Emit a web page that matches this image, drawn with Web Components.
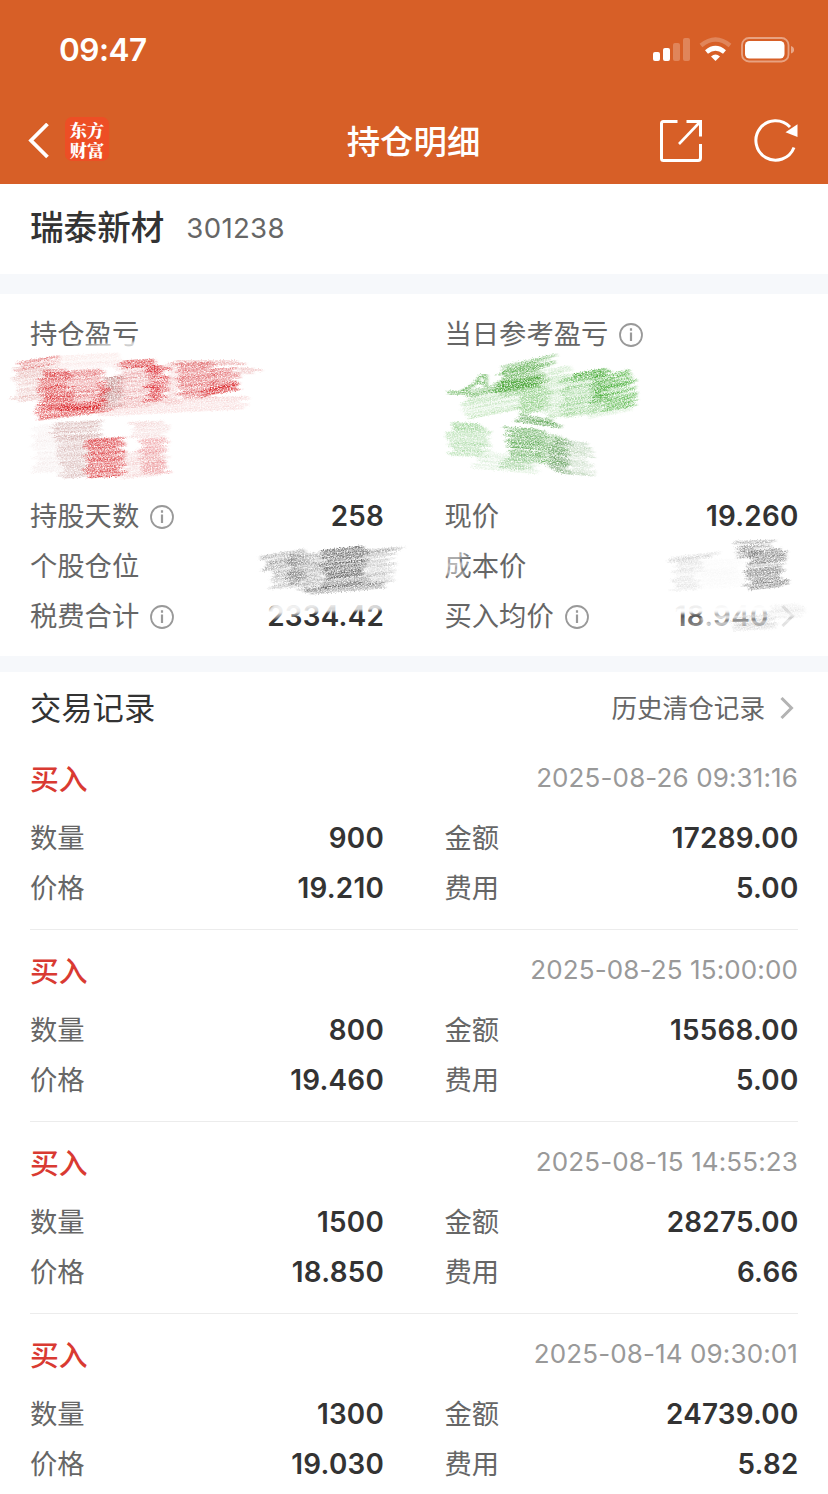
<!DOCTYPE html>
<html lang="zh-CN">
<head>
    <meta charset="UTF-8">
    <title>持仓明细</title>
    <style>
        body{
            margin:0;
            width:828px;
            height:1494px;
            overflow:hidden;
            background-color:#fff;
            color:#333;
            font-family:Inter,"Noto Sans CJK SC",sans-serif;
        }
    </style>
</head>
<body>
<template id="status-bar-template">
    <style>
        :host{
            display:flex;
            justify-content:space-between;
            height:98px;
            padding:0 34px 0 59px;
            background-color:#d75f27;
            color:#fff;
            box-sizing:border-box;
        }
        .time{
            font-size:31.5px;
            font-weight:600;
            line-height:99px;
            letter-spacing:-.5px;
        }
        svg{
            display:block;
            margin-top:36px;
        }
    </style>
    <span class="time"><slot></slot></span>
    <svg width="142" height="28" viewBox="652 36 142 28" fill="#fff">
        <rect x="653" y="52" width="7" height="9" rx="2"/>
        <rect x="663" y="48" width="7" height="13" rx="2"/>
        <rect x="673" y="43" width="7" height="18" rx="2" opacity=".24"/>
        <rect x="683" y="38" width="7" height="23" rx="2" opacity=".24"/>
        <path d="M701 45.500Q715.500 33.500 730 45.500" fill="none" stroke="#fff" stroke-width="4.400" opacity=".24"/>
        <path d="M706.500 52Q715.500 44.500 724.500 52" fill="none" stroke="#fff" stroke-width="4.600"/>
        <path d="M711 56.500Q715.500 52.600 720 56.500L715.500 61Z"/>
        <rect x="742" y="38" width="46.500" height="23.500" rx="7" fill="none" stroke="#fff" stroke-width="1.800" opacity=".42"/>
        <rect x="745" y="41" width="39.500" height="17.500" rx="4.500"/>
        <path d="M791 46q3.200 1 3.200 3.800t-3.200 3.800z" opacity=".45"/>
    </svg>
</template>

<template id="nav-bar-template">
    <style>
        :host{
            display:grid;
            grid-template-columns:1fr auto 1fr;
            align-items:center;
            height:86px;
            padding:0 29px 0 28px;
            background-color:#d75f27;
            color:#fff;
            box-sizing:border-box;
        }
        h1{
            margin:0;
            padding-top:1px;
            font-size:33.4px;
            font-weight:500;
            line-height:48px;
        }
        .left{
            display:flex;
            align-items:center;
            gap:16px;
        }
        .logo{
            width:44px;
            height:44px;
            border-radius:7px;
            background-color:#ed4e25;
            font:900 17.2px/20px "Liberation Sans","Noto Serif CJK SC","Noto Sans CJK SC",sans-serif;
            text-align:center;
            box-sizing:border-box;
            padding-top:4px;
            margin-top:-4px;
        }
        .right{
            display:flex;
            justify-content:flex-end;
            gap:50px;
        }
        svg{
            display:block;
            fill:none;
            stroke:#fff;
        }
    </style>
    <div class="left">
        <svg width="21" height="36" viewBox="0 0 21 36" stroke-width="3.800"><path d="M19.500 1L3 17.500L19.500 34"/></svg>
        <div class="logo">东方<br>财富</div>
    </div>
    <h1><slot></slot></h1>
    <div class="right">
        <svg width="44" height="44" viewBox="0 0 44 44" stroke-width="3">
            <path d="M18.500 2.500H4.500Q2.500 2.500 2.500 4.500V39.500Q2.500 41.500 4.500 41.500H39Q41.500 41.500 41.500 39V25"/>
            <path d="M27.500 2.500H41.500V17.500"/>
            <path d="M40 4L20 25" stroke-width="2.600"/>
        </svg>
        <svg width="46" height="44" viewBox="0 0 46 44" stroke-width="3">
            <path d="M37 8A19.700 19.700 0 1 0 41 28.500"/>
            <path d="M44.500 5.300V18L32.500 13.200Z" fill="#fff" stroke="none"/>
        </svg>
    </div>
</template>

<template id="stock-title-template">
    <style>
        :host{
            display:flex;
            align-items:center;
            gap:22px;
            height:88px;
            padding:0 30px 2px;
            border-bottom:20px solid #f6f8fb;
        }
        .name{
            font-size:33.6px;
            font-weight:500;
            line-height:50px;
        }
        .code{
            color:#666;
            font-size:27.6px;
            letter-spacing:.3px;
        }
    </style>
    <span class="name"><slot name="name"></slot></span>
    <span class="code"><slot name="code"></slot></span>
</template>

<template id="info-icon-template">
    <style>
        :host{
            display:inline-block;
            width:24px;
            height:24px;
            margin-left:11px;
            margin-top:-1px;
        }
        svg{
            display:block;
        }
    </style>
    <svg width="24" height="24" viewBox="0 0 24 24" fill="none" stroke="#999" stroke-width="1.800">
        <circle cx="12" cy="12" r="11"/>
        <path d="M12 9.500V18M12 5.300V7.700" stroke-width="2.200"/>
    </svg>
</template>

<template id="arrow-icon-template">
    <style>
        :host{
            display:block;
            width:14px;
            height:22px;
        }
        svg{
            display:block;
        }
    </style>
    <svg width="14" height="22" viewBox="0 0 14 22" fill="none" stroke="#b3b3b3" stroke-width="3"><path d="M1.500 1L11.500 11L1.500 21"/></svg>
</template>

<template id="data-field-template">
    <style>
        :host{
            display:flex;
            align-items:center;
            height:50px;
        }
        .label{
            flex:1;
            display:flex;
            align-items:center;
            padding-top:2px;
            color:#666;
            font-size:27.3px;
            line-height:40px;
            white-space:nowrap;
        }
        .value{
            font-size:27.8px;
            font-weight:600;
            letter-spacing:.25px;
            line-height:40px;
            margin-right:-.5px;
        }
        ::slotted(arrow-icon){
            margin:0 3px 0 13px;
        }
    </style>
    <span class="label"><slot name="label"></slot><slot name="info"></slot></span>
    <span class="value"><slot></slot></span>
    <slot name="arrow"></slot>
</template>

<template id="holding-panel-template">
    <style>
        :host{
            display:grid;
            grid-template-columns:353.5px 353.5px;
            column-gap:61px;
            position:relative;
            height:332px;
            padding:15px 30px;
            border-bottom:16px solid #f6f8fb;
        }
        .col{
            display:flex;
            flex-direction:column;
        }
        .head{
            height:182px;
        }
    </style>
    <div class="col"><div class="head"><slot name="left-head"></slot></div><slot name="left"></slot></div>
    <div class="col"><div class="head"><slot name="right-head"></slot></div><slot name="right"></slot></div>
    <slot name="cover"></slot>
</template>

<template id="pencil-smudge-template">
    <style>
        :host{
            position:absolute;
            left:0;
            top:0;
            width:828px;
            height:362px;
            pointer-events:none;
        }
        svg{
            display:block;
        }
    </style>
    <svg width="828" height="362" viewBox="0 294 828 362">
        <defs>
            <filter id="grain" filterUnits="userSpaceOnUse" x="0" y="294" width="828" height="362" color-interpolation-filters="sRGB">
                <feTurbulence type="fractalNoise" baseFrequency=".7 .8" numOctaves="2" seed="8" result="noise"/>
                <feColorMatrix in="noise" type="matrix" values="0 0 0 0 0  0 0 0 0 0  0 0 0 0 0  2.200 0 0 0 -.400" result="mask"/>
                <feGaussianBlur in="SourceGraphic" stdDeviation="1.400 .6" result="blur"/>
                <feDisplacementMap in="blur" in2="noise" scale="4" xChannelSelector="R" yChannelSelector="G" result="rough"/>
                <feComposite in="rough" in2="mask" operator="in"/>
            </filter>
            <filter id="soft" filterUnits="userSpaceOnUse" x="0" y="294" width="828" height="362">
                <feGaussianBlur stdDeviation="1.300"/>
            </filter>
        </defs>
        <g id="white" filter="url(#soft)"></g>
        <g id="color" filter="url(#grain)"></g>
    </svg>
</template>

<template id="record-head-template">
    <style>
        :host{
            display:flex;
            align-items:center;
            height:60px;
            padding:6px 30px 0;
        }
        .title{
            flex:1;
            margin-top:-4px;
            font-size:31.3px;
        }
        .more{
            color:#666;
            font-size:25.6px;
            margin-top:-3px;
            margin-right:15px;
        }
        arrow-icon{
            margin-right:4px;
        }
    </style>
    <span class="title"><slot></slot></span>
    <span class="more"><slot name="more"></slot></span>
    <arrow-icon></arrow-icon>
</template>

<template id="trade-record-template">
    <style>
        :host{
            display:block;
            height:175px;
            margin:0 30px;
            padding-top:16px;
            border-bottom:1px solid #ececec;
        }
        .top{
            display:flex;
            justify-content:space-between;
            align-items:center;
            height:46px;
            margin-bottom:13px;
        }
        .side{
            color:#d93a32;
            font-size:28.8px;
            font-weight:500;
        }
        .time{
            color:#999;
            font-size:26px;
            letter-spacing:.12px;
        }
        .grid{
            display:grid;
            grid-template-columns:353.5px 353.5px;
            column-gap:61px;
        }
    </style>
    <div class="top"><span class="side">买入</span><span class="time"></span></div>
    <div class="grid">
        <data-field><span slot="label">数量</span><span class="count"></span></data-field>
        <data-field><span slot="label">金额</span><span class="amount"></span></data-field>
        <data-field><span slot="label">价格</span><span class="price"></span></data-field>
        <data-field><span slot="label">费用</span><span class="fee"></span></data-field>
    </div>
</template>

<status-bar>09:47</status-bar>
<nav-bar>持仓明细</nav-bar>
<stock-title><span slot="name">瑞泰新材</span><span slot="code">301238</span></stock-title>
<holding-panel>
    <data-field slot="left-head"><span slot="label">持仓盈亏</span></data-field>
    <data-field slot="left"><span slot="label">持股天数</span><info-icon slot="info"></info-icon>258</data-field>
    <data-field slot="left"><span slot="label">个股仓位</span></data-field>
    <data-field slot="left"><span slot="label">税费合计</span><info-icon slot="info"></info-icon>2334.42</data-field>
    <data-field slot="right-head"><span slot="label">当日参考盈亏</span><info-icon slot="info"></info-icon></data-field>
    <data-field slot="right"><span slot="label">现价</span>19.260</data-field>
    <data-field slot="right"><span slot="label">成本价</span></data-field>
    <data-field slot="right"><span slot="label">买入均价</span><info-icon slot="info"></info-icon>18.940<arrow-icon slot="arrow"></arrow-icon></data-field>
    <pencil-smudge slot="cover"></pencil-smudge>
</holding-panel>
<record-head>交易记录<span slot="more">历史清仓记录</span></record-head>
<trade-record time="2025-08-26 09:31:16" count="900" amount="17289.00" price="19.210" fee="5.00"></trade-record>
<trade-record time="2025-08-25 15:00:00" count="800" amount="15568.00" price="19.460" fee="5.00"></trade-record>
<trade-record time="2025-08-15 14:55:23" count="1500" amount="28275.00" price="18.850" fee="6.66"></trade-record>
<trade-record time="2025-08-14 09:30:01" count="1300" amount="24739.00" price="19.030" fee="5.82"></trade-record>

<script type="text/javascript">
    class BaseElement extends HTMLElement {
        constructor() {
            super();
            const template = document.getElementById(this.localName + "-template").content;
            this.attachShadow({mode: 'open'}).appendChild(template.cloneNode(true));
        }
    }

    // x, y, width, height, slope, color, opacity
    const smudges = [
        [15,366,40,34,-.12,"#d98c88",.36],
        [18,359,37,9,-.2,"#dc5a5c",.55],
        [42,370,28,40,-.05,"#dc3438",.75],
        [66,370,38,40,-.06,"#dc4a4e",.52],
        [36,405,72,11,-.12,"#dc2c30",.6],
        [62,407,41,3,-.07,"#d81c20",1],
        [103,378,18,31,-.1,"#b9807e",.7],
        [98,382,8,24,-.1,"#dc3438",.65],
        [55,355,70,14,-.05,"#f0b4b0",.22],
        [118,364,34,44,-.08,"#e07a7c",.44],
        [120,360,40,7,-.04,"#dc3c40",.8],
        [148,366,18,36,-.03,"#dc2c34",.85],
        [165,363,16,42,-.05,"#eeb0b0",.4],
        [180,363,32,36,-.05,"#dc4a4e",.6],
        [210,369,26,22,-.05,"#dc4a4e",.65],
        [204,386,38,8,-.18,"#dc3034",.85],
        [176,361,64,4,0,"#dc6c6c",.45],
        [234,368,23,6,0,"#e08c8c",.45],
        [100,400,145,14,-.05,"#f0b4b4",.36],
        [52,422,46,18,-.05,"#c99a98",.48],
        [60,438,30,40,-.06,"#c79a98",.48],
        [34,425,30,48,-.04,"#e4cccc",.24],
        [87,438,35,39,-.06,"#dc3c40",.78],
        [132,422,33,16,-.04,"#eab4b4",.36],
        [142,438,24,35,-.06,"#e66c72",.5],
        [126,452,38,25,-.1,"#ecb0b0",.4],
        [500,366,40,28,-.25,"#50a840",.62],
        [505,360,51,11,-.24,"#68b45c",.55],
        [496,379,49,12,-.12,"#3ea02a",.78],
        [464,388,40,7,-.18,"#52aa44",.55],
        [447,391,22,3,0,"#52aa44",.5],
        [465,392,80,20,-.2,"#92d088",.38],
        [518,387,30,26,-.16,"#62ba54",.54],
        [545,368,24,49,-.2,"#9cd494",.4],
        [568,371,36,7,-.18,"#40a830",.85],
        [562,376,36,40,-.15,"#78c46e",.5],
        [594,372,13,34,-.1,"#46aa36",.75],
        [605,373,29,35,-.23,"#48b038",.7],
        [590,403,40,12,-.2,"#92d088",.28],
        [450,423,36,34,.04,"#86ca7e",.5],
        [508,428,34,34,.08,"#4ea244",.72],
        [517,418,41,8,.16,"#529e48",.75],
        [540,435,25,30,.13,"#62ac58",.6],
        [503,460,24,9,.12,"#72b86a",.5],
        [551,440,18,34,.15,"#6a9e64",.64],
        [569,442,22,33,.12,"#a8c8a4",.52],
        [476,454,60,18,.1,"#b4dcb0",.3],
        [265,553,42,16,-.18,"#808080",.55],
        [272,569,35,20,-.08,"#999",.5],
        [289,555,12,30,.03,"#686868",.55],
        [300,554,25,38,-.06,"#909090",.55],
        [323,549,42,37,-.12,"#555",.68],
        [364,551,27,34,-.12,"#999",.42],
        [306,586,80,6,-.08,"#606060",.62],
        [365,548,34,4,-.08,"#888",.45],
        [671,555,45,5,-.12,"#999",.3],
        [674,559,25,31,-.04,"#aaa",.22],
        [700,560,42,28,-.05,"#ccc",.08],
        [738,541,33,7,-.04,"#777",.52],
        [740,548,18,10,-.05,"#555",.55],
        [748,551,36,37,-.1,"#666",.66],
        [733,616,40,14,-.05,"#999",.25],
        [770,605,30,14,-.08,"#bbb",.15]
    ];
    // erased parts over the texts
    const erased = [
        [78,344,65,6,-.08,"#fff",.8],
        [268,601,118,11,-.04,"#fff",.85],
        [268,607,38,9,-.15,"#fff",.55],
        [442,553,22,24,-.05,"#fff",.5],
        [672,603,100,9,-.02,"#fff",1],
        [672,604,100,8,-.02,"#fff",1],
        [706,604,98,26,-.04,"#fff",.72],
        [676,612,32,16,0,"#fff",.3]
    ];

    customElements.define('status-bar',class extends BaseElement {});
    customElements.define('nav-bar',class extends BaseElement {});
    customElements.define('stock-title',class extends BaseElement {});
    customElements.define('info-icon',class extends BaseElement {});
    customElements.define('arrow-icon',class extends BaseElement {});
    customElements.define('data-field',class extends BaseElement {});
    customElements.define('holding-panel',class extends BaseElement {});
    customElements.define('record-head',class extends BaseElement {});
    customElements.define('pencil-smudge',class extends BaseElement {
        constructor() {
            super();
            let seed = 7;
            let random = function (){
                seed = (seed * 16807) % 2147483647;
                return seed / 2147483647;
            };
            let addPath = function (group,d,color,width,opacity){
                const line = document.createElementNS("http://www.w3.org/2000/svg","path");
                line.setAttribute("d",d);
                line.setAttribute("fill","none");
                line.setAttribute("stroke",color);
                line.setAttribute("stroke-width",width);
                line.setAttribute("opacity",opacity);
                group.appendChild(line);
            };
            let draw = function (list,group){
                for(let [x,y,w,h,slope,color,opacity] of list){
                    for(let i = 0;i<h;i+=2){
                        const x1 = x + random() * 10 - 5;
                        const x2 = x + w + random() * 12 - 6;
                        const mid = y + i + random();
                        addPath(group,"M" + x1 + " " + (mid - slope * w / 2) + "L" + x2 + " " + (mid + slope * w / 2),
                            color,1.8 + random() * 1.4,opacity * (.6 + random() * .5));
                    }
                }
            };
            const colorGroup = this.shadowRoot.getElementById("color");
            draw(erased,this.shadowRoot.getElementById("white"));
            draw(smudges,colorGroup);
            addPath(colorGroup,"M462 391Q473 388 481 376H486V388M478 383H486","#52aa44",3.4,.75);
        }
    });
    customElements.define('trade-record',class extends BaseElement {
        connectedCallback() {
            for(let name of ["time","count","amount","price","fee"]){
                this.shadowRoot.querySelector("." + name).textContent = this.getAttribute(name);
            }
        }
    });
</script>
</body>
</html>
